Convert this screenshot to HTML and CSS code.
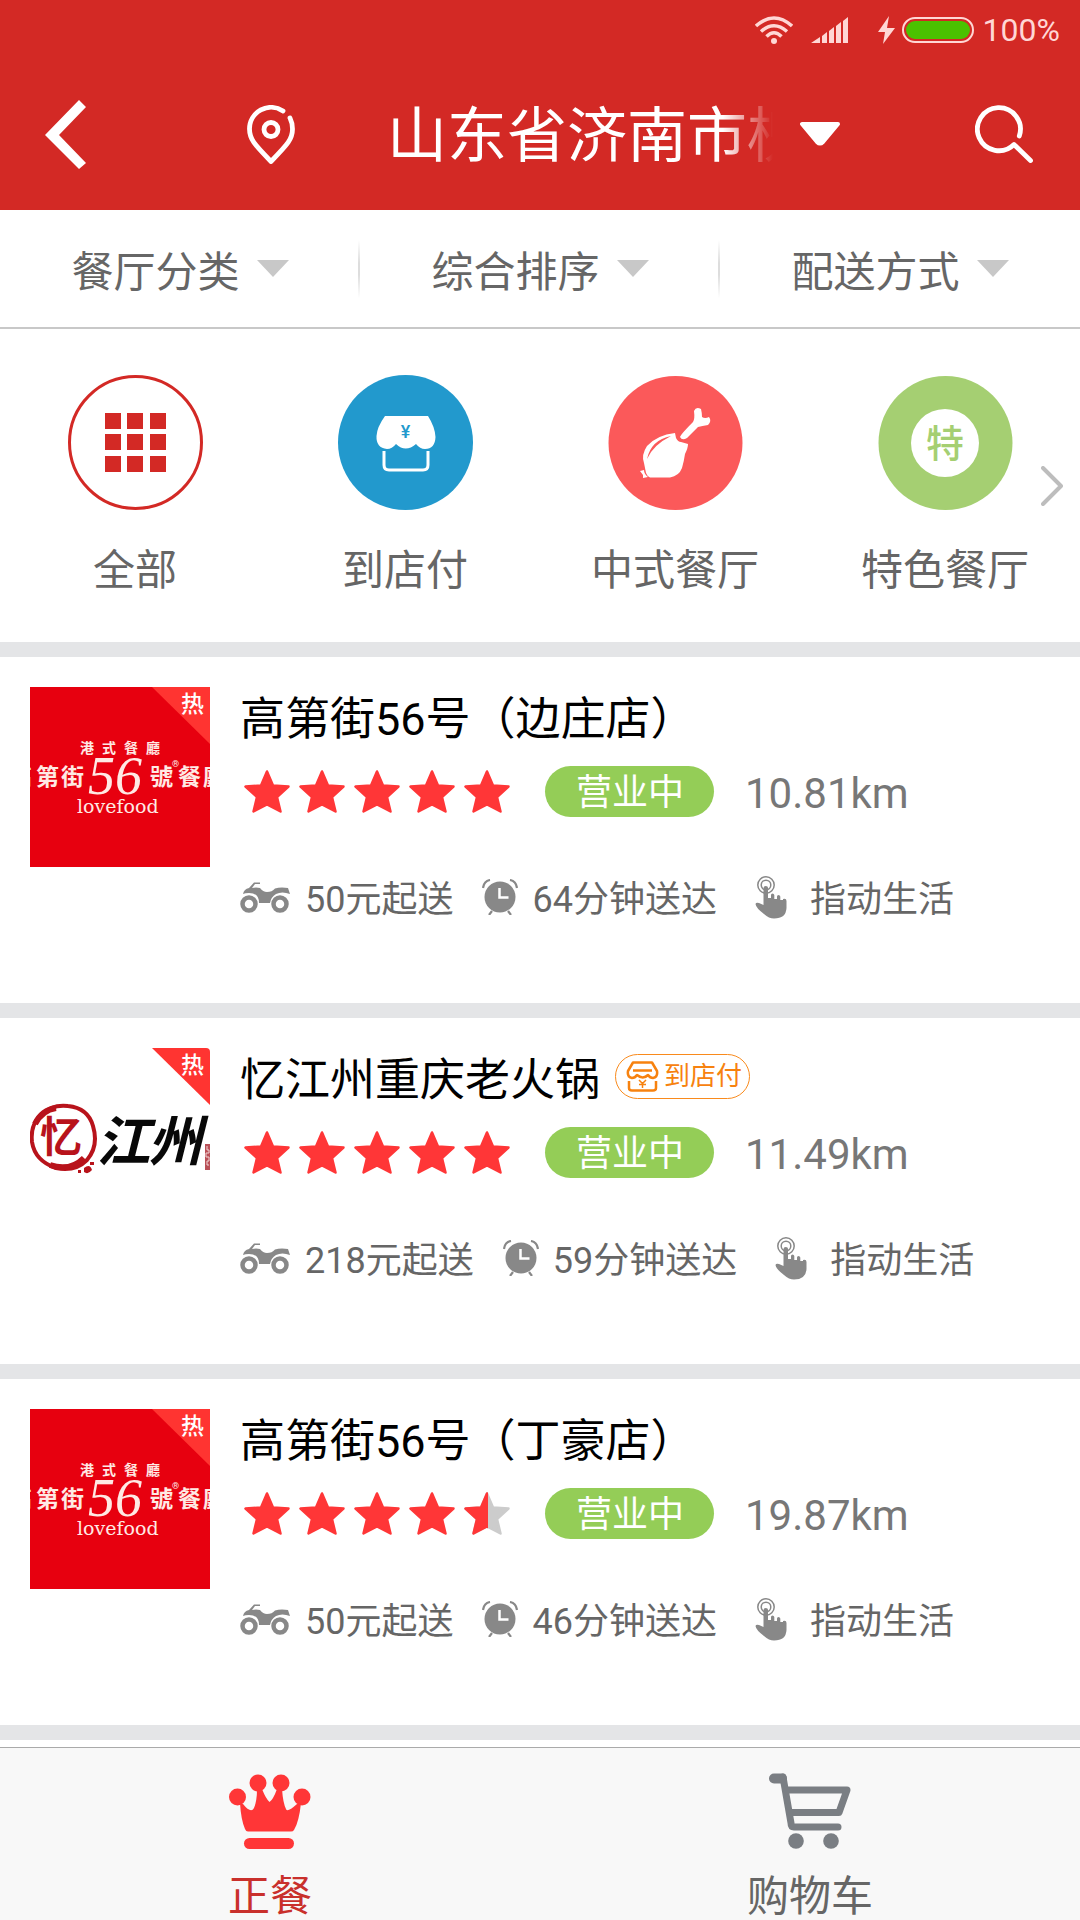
FILE: index.html
```html
<!DOCTYPE html>
<html lang="zh-CN">
<head>
<meta charset="utf-8">
<meta name="viewport" content="width=device-width">
<title>正餐</title>
<link rel="stylesheet" href="styles.css">
</head>
<body>
<svg class="sprite" aria-hidden="true">
  <symbol id="star" viewBox="0 0 46 43"><path d="M23 1.500 29 15.500 44.500 16.500 33 27 36.500 41.500 23 34.500 9.500 41.500 13 27 1.500 16.500 17 15.500Z" stroke-width="2.500" stroke-linejoin="round"/></symbol>
  <symbol id="atv" viewBox="0 0 50 31">
    <path d="M3 12Q4 7 9 6L14 .5H20V2H15L12 6Q16 5 20 6Q23 10 27 10Q32 10 35 6.500Q40 5 48 6L50 12Q42 9 36 12Q31 15 30 21H19Q19 11 9 11Q5 11 3 12Z" fill="currentColor"/>
    <g fill="none" stroke="currentColor" stroke-width="4.500"><circle cx="9" cy="22" r="6.500"/><circle cx="40" cy="22" r="6.500"/></g>
  </symbol>
  <symbol id="clock" viewBox="0 0 36 36">
    <circle cx="18" cy="18" r="15.500" fill="currentColor"/>
    <path d="M1 9Q2 2 8 1M35 9Q34 2 28 1M10 32 7 36M26 32 29 36" fill="none" stroke="currentColor" stroke-width="2.200"/>
    <path d="M17.500 9V18.500H26.500" fill="none" stroke="#fff" stroke-width="2.500"/>
  </symbol>
  <symbol id="hand" viewBox="0 0 32 43">
    <g fill="none" stroke="currentColor" stroke-width="1.500"><circle cx="11" cy="9" r="8.200"/><circle cx="11" cy="9" r="4.800"/></g>
    <path d="M8.500 12Q8.500 10 10.800 10T13 12V22H16V19Q16 17.500 17.500 17.500T19.300 19V23H22V20.500Q22 19 23.500 19T25.300 20.500V24H28V23Q31.500 22 31.500 25V32Q31 42.500 19 42.500Q14 42.500 9 38Q1 32 .5 28Q1 26 4 27L8.500 29Z" fill="currentColor"/>
  </symbol>
</svg>

<div class="app">
  <header class="top">
    <div class="status">
      <svg class="wifi" width="38" height="28" viewBox="0 0 38 28" fill="none" stroke="currentColor" stroke-width="3.500"><path d="M1 10Q19-6 37 10M6 15.500Q19 4 32 15.500M11.500 20.500Q19 13 26.500 20.500"/><circle cx="19" cy="25" r="3" fill="currentColor" stroke="none"/></svg>
      <svg class="signal" width="37" height="26" viewBox="0 0 37 26" fill="currentColor"><path d="M0 26 9 20V26ZM11 19 16 15V26H11ZM18 14 23 10V26H18ZM25 9 30 5V26H25ZM32 4 37 0V26H32Z"/></svg>
      <svg class="bolt" width="17" height="28" viewBox="0 0 17 28" fill="currentColor"><path d="M11 0 0 16H7L5 28 17 12H9Z"/></svg>
      <svg class="battery" width="72" height="26" viewBox="0 0 72 26"><rect x="1" y="1" width="70" height="24" rx="12" fill="none" stroke="currentColor" stroke-width="2"/><rect x="4" y="4" width="64" height="18" rx="9" fill="#4bc200"/></svg>
      <span>100%</span>
    </div>
    <div class="titlebar">
      <button class="back" aria-label="返回"><svg width="41" height="69" viewBox="0 0 41 69" fill="#fff"><path d="M34 0 41 7 14 35 41 63 34 69 0 35Z"/></svg></button>
      <button class="place">
        <svg width="48" height="59" viewBox="0 0 48 59" fill="none" stroke="#fff" stroke-width="4.800" stroke-linecap="round" stroke-linejoin="round"><path d="M36 6A21.500 21.500 0 0 0 2.500 24C2.500 34 7 39 24 56.500C41 39 45.500 34 45.500 24Q45.500 18 43 13"/><circle cx="24" cy="24.500" r="7"/></svg>
        <span class="address">山东省济南市槐荫区</span>
        <svg width="40" height="24" viewBox="0 0 40 24" fill="#fff" stroke="#fff" stroke-width="4" stroke-linejoin="round"><path d="M2 2H38L23 20Q20 23 17 20Z"/></svg>
      </button>
      <button class="search" aria-label="搜索"><svg width="58" height="58" viewBox="0 0 58 58" fill="none" stroke="#fff" stroke-width="4.800" stroke-linecap="round" stroke-linejoin="round"><path d="M44.300 31A21.500 21.500 0 1 0 39 39.500L55.500 55.500"/></svg></button>
    </div>
  </header>

  <nav class="filters" aria-label="筛选">
    <div class="filter"><select aria-label="餐厅分类"><option>餐厅分类</option></select><i class="caret"></i></div>
    <div class="filter"><select aria-label="综合排序"><option>综合排序</option></select><i class="caret"></i></div>
    <div class="filter"><select aria-label="配送方式"><option>配送方式</option></select><i class="caret"></i></div>
  </nav>

  <section class="categories">
    <a class="category" href="#all">
      <svg width="135" height="135" viewBox="0 0 135 135"><circle cx="67.500" cy="67.500" r="66" fill="#fff" stroke="#d32925" stroke-width="3"/><path fill="#d32925" d="M37 38h16v16H37zM59 38h16v16H59zM82 38h16v16H82zM37 59h16v16H37zM59 59h16v16H59zM82 59h16v16H82zM37 81h16v16H37zM59 81h16v16H59zM82 81h16v16H82z"/></svg>
      <span>全部</span>
    </a>
    <a class="category" href="#instore">
      <svg width="135" height="135" viewBox="0 0 135 135"><circle cx="67.500" cy="67.500" r="67.500" fill="#2299cd"/><path d="M47 41H90Q97 52 97.500 62Q97 74 87 74Q82 74 78 69Q67.500 78 58 69Q54 74 49 74Q38 73 38.500 61Q39 52 47 41Z" fill="#fff"/><path d="M46 76V90Q46 95 51 95H85Q90 95 90 90V76" fill="none" stroke="#fff" stroke-width="3"/><text class="yen" x="67.500" y="63" font-size="18" fill="#2299cd">¥</text></svg>
      <span>到店付</span>
    </a>
    <a class="category" href="#chinese">
      <svg width="135" height="135" viewBox="0 0 135 135"><circle cx="67.500" cy="68" r="67" fill="#fb595a"/><g fill="#fff"><path d="M72 62Q73 59 85 47Q87 44 86 36Q88 31 93 34Q94 38 94 42Q97 44 101 42Q104 46 100 50Q94 51 90 52L79 63Q74 66 72 62Z"/><path d="M67 58 68 63Q70 67 73 67L80 69Q80 73 77 79Q76 86 74 93Q71 101 62 102.500H42Q39 101 38 98L36 88Q33 80 39 71Q49 60 67 58Z"/><path d="M32 96 36 95Q36 99 40 102L35 103V100Z"/></g><path d="M63 61Q43 65 39 84Q45 70 63 61Z" fill="#fb595a"/></svg>
      <span>中式餐厅</span>
    </a>
    <a class="category" href="#special">
      <svg width="135" height="135" viewBox="0 0 135 135"><circle cx="67.500" cy="68" r="67" fill="#a5cf72"/><circle cx="67" cy="68" r="34" fill="#fff"/><text class="seal" x="67" y="82" font-size="38" fill="#a5cf72">特</text></svg>
      <span>特色餐厅</span>
    </a>
    <svg class="more" width="22" height="40" viewBox="0 0 22 40" fill="none" stroke="#bdbdbd" stroke-width="4" stroke-linecap="round" stroke-linejoin="round"><path d="M2 2 20 20 2 38"/></svg>
  </section>

  <main class="list">
    <article class="shop">
      <div class="logo">
        <svg width="180" height="180" viewBox="0 0 180 180"><rect width="180" height="180" fill="#e7000f"/><path d="M122 0H180V57Z" fill="#ff3431"/>
          <g fill="#ffe9e4"><g class="brand" font-size="14"><text x="50" y="66">港</text><text x="72" y="66">式</text><text x="94" y="66">餐</text><text x="116" y="66">廳</text></g>
          <g class="brand" font-size="23"><text x="-21" y="98">高</text><text x="6" y="98">第</text><text x="31" y="98">街</text><text x="120" y="98">號</text><text x="148" y="98">餐</text><text x="173" y="98">廳</text></g>
          <text class="numeral" x="58" y="107" font-size="54">56</text><text class="mark" x="142" y="80" font-size="9">®</text><text class="latin" x="47" y="126" font-size="19">lovefood</text></g>
          <text class="hot" x="151" y="25" font-size="23">热</text></svg>
      </div>
      <div class="info">
        <h2>高第街56号（边庄店）</h2>
        <div class="rating">
          <span class="stars" role="img" aria-label="5 星"><svg><use href="#star"/></svg><svg><use href="#star"/></svg><svg><use href="#star"/></svg><svg><use href="#star"/></svg><svg><use href="#star"/></svg></span>
          <span class="open">营业中</span><span class="distance">10.81km</span>
        </div>
        <ul class="facts">
          <li class="fee"><svg width="50" height="31"><use href="#atv"/></svg>50元起送</li>
          <li class="time"><svg width="36" height="36"><use href="#clock"/></svg>64分钟送达</li>
          <li class="by"><svg width="32" height="43"><use href="#hand"/></svg>指动生活</li>
        </ul>
      </div>
    </article>

    <article class="shop">
      <div class="logo">
        <svg width="180" height="180" viewBox="0 0 180 180"><path d="M122 0H176Q180 0 180 4V57Z" fill="#ff3431"/>
          <g fill="none" stroke="#b8131b"><path d="M11 67Q22 56 38 58Q58 60 63 78Q69 98 57 112Q45 124 26 120Q5 113 2 94Q0 77 11 67Z" stroke-width="4"/><path d="M5 76Q12 62 26 60M20 117Q40 124 54 110" stroke-width="6"/></g>
          <path d="M54 120Q60 115 62 122Q58 127 54 124ZM48 122h3v3h-3ZM60 114h4v3h-4ZM14 61h3v3h-3Z" fill="#b8131b"/>
          <text class="brush" x="10" y="104" font-size="42" fill="#b8131b">忆</text>
          <text class="brush slant" x="66" y="113" font-size="54" fill="#080808">江</text>
          <text class="brush slant" x="118" y="113" font-size="54" fill="#080808">州</text>
          <path d="M175 96H180V122H175Z" fill="#b95058"/><path d="M177 98v4h2v3h-3v4h3v4h-2v4h2" fill="none" stroke="#f0d5d5"/>
          <text class="hot" x="151" y="25" font-size="23">热</text></svg>
      </div>
      <div class="info">
        <h2>忆江州重庆老火锅
          <span class="badge"><svg width="33" height="31" viewBox="0 0 33 31" fill="none" stroke="currentColor" stroke-width="2.500" stroke-linejoin="round"><path d="M7 1.500H26L31 10Q32 16 27 17Q24 17 22 14Q17 19 11 14Q9 17 6 17Q1 16 2 10ZM7 9.500H26M3 20V27Q3 29.500 6 29.500H27Q30 29.500 30 27V20"/><path d="M13 19 16.500 22.500 20 19M16.500 22.500V27M13 23.500H20" stroke-width="1.500"/></svg>到店付</span>
        </h2>
        <div class="rating">
          <span class="stars" role="img" aria-label="5 星"><svg><use href="#star"/></svg><svg><use href="#star"/></svg><svg><use href="#star"/></svg><svg><use href="#star"/></svg><svg><use href="#star"/></svg></span>
          <span class="open">营业中</span><span class="distance">11.49km</span>
        </div>
        <ul class="facts">
          <li class="fee"><svg width="50" height="31"><use href="#atv"/></svg>218元起送</li>
          <li class="time"><svg width="36" height="36"><use href="#clock"/></svg>59分钟送达</li>
          <li class="by"><svg width="32" height="43"><use href="#hand"/></svg>指动生活</li>
        </ul>
      </div>
    </article>

    <article class="shop">
      <div class="logo">
        <svg width="180" height="180" viewBox="0 0 180 180"><rect width="180" height="180" fill="#e7000f"/><path d="M122 0H180V57Z" fill="#ff3431"/>
          <g fill="#ffe9e4"><g class="brand" font-size="14"><text x="50" y="66">港</text><text x="72" y="66">式</text><text x="94" y="66">餐</text><text x="116" y="66">廳</text></g>
          <g class="brand" font-size="23"><text x="-21" y="98">高</text><text x="6" y="98">第</text><text x="31" y="98">街</text><text x="120" y="98">號</text><text x="148" y="98">餐</text><text x="173" y="98">廳</text></g>
          <text class="numeral" x="58" y="107" font-size="54">56</text><text class="mark" x="142" y="80" font-size="9">®</text><text class="latin" x="47" y="126" font-size="19">lovefood</text></g>
          <text class="hot" x="151" y="25" font-size="23">热</text></svg>
      </div>
      <div class="info">
        <h2>高第街56号（丁豪店）</h2>
        <div class="rating">
          <span class="stars" role="img" aria-label="4.5 星"><svg><use href="#star"/></svg><svg><use href="#star"/></svg><svg><use href="#star"/></svg><svg><use href="#star"/></svg><svg class="half" viewBox="0 0 46 43"><use href="#star" class="off"/><svg width="24" height="43" viewBox="0 0 24 43"><use href="#star" width="46" height="43"/></svg></svg></span>
          <span class="open">营业中</span><span class="distance">19.87km</span>
        </div>
        <ul class="facts">
          <li class="fee"><svg width="50" height="31"><use href="#atv"/></svg>50元起送</li>
          <li class="time"><svg width="36" height="36"><use href="#clock"/></svg>46分钟送达</li>
          <li class="by"><svg width="32" height="43"><use href="#hand"/></svg>指动生活</li>
        </ul>
      </div>
    </article>
  </main>

  <nav class="tabs" aria-label="主导航">
    <a class="tab current" href="#dinner">
      <svg width="82" height="76" viewBox="0 0 82 76" fill="#ff3637"><circle cx="8.500" cy="24" r="8.500"/><circle cx="29" cy="10" r="8.500"/><circle cx="52" cy="10" r="8.500"/><circle cx="73" cy="24" r="8.500"/><path d="M11 30 14 31Q22 41 25 35Q28 28 28 16H33Q37 26 40.500 29Q44 27 48 16H53Q54 30 57 36Q58 40 68 31L72 30Q70 49 65 57Q64 58.500 62 58.500H19Q17 58.500 16 56Q12 47 11 30Z"/><rect x="15" y="65" width="50" height="11" rx="5.500"/></svg>
      <span>正餐</span>
    </a>
    <a class="tab" href="#cart">
      <svg width="82" height="76" viewBox="0 0 82 76" fill="none" stroke="#7a7e83" stroke-linecap="round" stroke-linejoin="round"><path d="M5 5.500H13" stroke-width="10"/><path d="M14 4 22 50Q22 54 25 54H69M18 17H78L70 39.500H23" stroke-width="7"/><g fill="#7a7e83" stroke="none"><circle cx="27" cy="68" r="7.800"/><circle cx="62" cy="68" r="7.800"/></g></svg>
      <span>购物车</span>
    </a>
  </nav>
</div>
</body>
</html>
```

FILE: styles.css
```css
* { box-sizing: border-box; }
body {
  margin: 0;
  background: #fff;
  color: #666;
  font-family: Roboto, "Noto Sans CJK SC", sans-serif;
}
svg { display: block; flex: none; }
a { color: inherit; text-decoration: none; }
button, select {
  appearance: none;
  margin: 0;
  padding: 0;
  border: 0;
  background: none;
  color: inherit;
  font: inherit;
}
.sprite { position: absolute; width: 0; height: 0; }
.app { display: flex; flex-direction: column; min-height: 100vh; }

/* header */
.top { background: #d32925; color: #fff; }
.status {
  display: flex;
  align-items: center;
  justify-content: flex-end;
  height: 60px;
  padding-right: 20px;
  color: #ffd7d5;
  font-size: 32px;
  line-height: 60px;
}
.signal { margin-left: 18px; }
.bolt { margin-left: 30px; }
.battery { margin-left: 7px; margin-right: 9px; }
.titlebar {
  display: grid;
  grid-template-columns: 1fr auto 1fr;
  align-items: center;
  height: 150px;
  padding-bottom: 2px;
}
.back { justify-self: start; padding-left: 45px; }
.place { display: flex; align-items: center; padding-left: 7px; }
.address {
  width: 386px;
  margin: 0 27px 0 92px;
  padding-top: 6px;
  overflow: hidden;
  white-space: nowrap;
  text-align: left;
  font-size: 60px;
  line-height: 90px;
  mask-image: linear-gradient(to right, #000 87%, transparent);
}
.search { justify-self: end; padding-right: 47px; }

/* filters */
.filters {
  display: grid;
  grid-template-columns: repeat(3, 1fr);
  border-bottom: 2px solid #c8c8c8;
}
.filter {
  display: flex;
  align-items: center;
  justify-content: center;
  gap: 16px;
  padding: 29px 0;
  font-size: 42px;
  line-height: 59px;
  background: linear-gradient(transparent, #ddd 40%, #ddd 60%, transparent) right center / 2px 58px no-repeat;
}
.filter:last-child { background: none; }
.filter select { height: 59px; padding-top: 4px; }
.caret {
  border: solid transparent;
  border-width: 17px 16px 0;
  border-top-color: #c8c8c8;
}

/* categories */
.categories {
  position: relative;
  display: grid;
  grid-template-columns: repeat(4, 1fr);
  padding: 46px 0 44px;
  border-bottom: 15px solid #e4e5e7;
}
.category {
  display: flex;
  flex-direction: column;
  align-items: center;
  gap: 34px;
  font-size: 42px;
  line-height: 54px;
}
.more { position: absolute; right: 17px; top: 137px; }
.yen, .seal { text-anchor: middle; font-weight: 500; }

/* restaurant list */
.list { flex: 1; }
.shop {
  display: flex;
  gap: 30px;
  padding: 30px 30px 76px;
  border-bottom: 15px solid #e4e5e7;
}
.brand { font-family: "Noto Sans CJK TC", sans-serif; font-weight: 700; }
.numeral { font-family: "Liberation Serif", serif; font-style: italic; }
.latin { font-family: "DejaVu Serif", serif; }
.brush { font-family: "Noto Sans CJK SC", sans-serif; font-weight: 700; }
.slant { font-style: italic; }
.hot { fill: #fff; font-weight: 500; }
.info { flex: 1; }
h2 {
  display: flex;
  align-items: center;
  margin: 0;
  color: #000;
  font-size: 45px;
  font-weight: 400;
  line-height: 66px;
}
.badge {
  display: flex;
  align-items: center;
  align-self: flex-start;
  gap: 5px;
  margin: 6px 0 0 15px;
  padding: 0 7px 0 10px;
  border: 1px solid #f98a1c;
  border-radius: 23px;
  color: #f7820f;
  font-size: 26px;
  line-height: 43px;
}
.rating { display: flex; align-items: center; margin-top: 13px; }
.stars { display: flex; gap: 9px; margin-left: 4px; }
.stars > svg { width: 46px; height: 43px; fill: #ff3637; stroke: #ff3637; }
.off { fill: #ccc; stroke: #ccc; }
.open {
  margin-left: 35px;
  padding: 4px 30px 0 31px;
  border-radius: 26px;
  background: #94cd57;
  color: #fff;
  font-size: 36px;
  line-height: 47px;
}
.distance {
  margin-left: 31px;
  padding-top: 4px;
  color: #777;
  font-size: 42px;
  line-height: 47px;
}
.facts {
  display: flex;
  margin: 56px 0 0;
  padding: 0;
  list-style: none;
  font-size: 36px;
  line-height: 54px;
}
.facts li { display: flex; align-items: center; }
.facts svg { margin-bottom: 6px; color: #888; }
.fee { gap: 15px; }
.time { gap: 14px; margin-left: 29px; }
.by { gap: 23px; margin-left: 38px; }

/* bottom tabs */
.tabs {
  display: grid;
  grid-template-columns: 1fr 1fr;
  border-top: 1px solid #aaa;
  background: #f8f8f8;
}
.tab {
  display: flex;
  flex-direction: column;
  align-items: center;
  gap: 25px;
  padding-top: 25px;
  font-size: 42px;
  line-height: 46px;
}
.current { color: #c9302c; }
```
